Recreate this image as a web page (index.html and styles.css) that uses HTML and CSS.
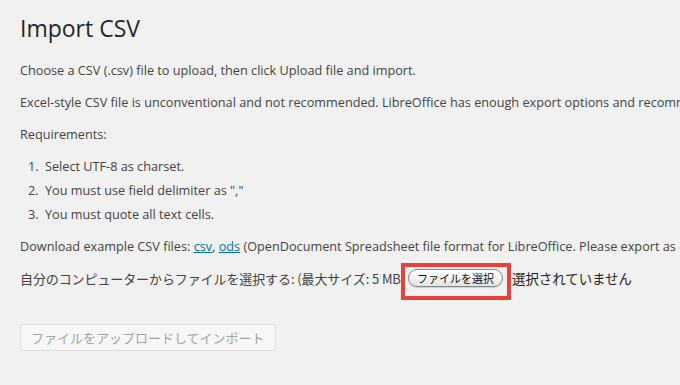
FILE: index.html
```html
<!DOCTYPE html>
<html lang="ja">
<head>
    <meta charset="UTF-8">
    <title>Import CSV</title>
    <link rel="stylesheet" href="styles.css">
</head>
<body>
    <div class="wrap">
        <h1>Import CSV</h1>

        <p>Choose a CSV (.csv) file to upload, then click Upload file and import.</p>
        <p>Excel-style CSV file is unconventional and not recommended. LibreOffice has enough export options and recommended for most users.</p>
        <p>Requirements:</p>
        <ol>
            <li>Select UTF-8 as charset.</li>
            <li>You must use field delimiter as ","</li>
            <li>You must quote all text cells.</li>
        </ol>
        <p class="examples">Download example CSV files: <a href="#">csv</a>, <a href="#">ods</a> (OpenDocument Spreadsheet file format for LibreOffice. Please export as csv before import)</p>

        <form class="upload-form">
            <p class="file-row">
                <label>自分のコンピューターからファイルを選択する: (最大サイズ: 5 MB)</label>
                <span class="highlight">
                    <span class="file-button">ファイルを選択</span>
                </span>
                <span class="file-status">選択されていません</span>
            </p>
            <p class="submit">
                <button type="button" class="button" disabled>ファイルをアップロードしてインポート</button>
            </p>
        </form>
    </div>
</body>
</html>
```

FILE: styles.css
```css
html, body {
    margin: 0;
    padding: 0;
    overflow: hidden;
}

body {
    background-color: #f1f1f1;
    color: #444444;
    font-family: 'Open Sans', 'Noto Sans CJK JP', sans-serif;
    font-size: 12.7px;
    line-height: 19px;
}

.wrap {
    padding: 0 20px;
    white-space: nowrap;
}

h1 {
    margin: 0;
    padding: 14px 0 5px;
    font-size: 23px;
    font-weight: 400;
    line-height: 29px;
    color: #23282d;
}

p {
    margin: 13px 0;
}

ol {
    margin: 13px 0 13px 25px;
    padding: 0;
}

ol li {
    margin-bottom: 5px;
}

ol li::marker {
    content: counter(list-item) ".\2002";
}

a {
    color: #0073aa;
}

.examples {
    margin-bottom: 7px;
}

.file-row {
    display: flex;
    align-items: center;
    margin-top: 0;
}

.file-row label {
    padding-bottom: 7px;
    font-family: 'Noto Sans CJK JP', sans-serif;
    font-size: 13px;
    letter-spacing: -0.1px;
}

.highlight {
    display: inline-flex;
    align-items: center;
    margin-left: -4px;
    padding: 2px 4px 9px 3px;
    border: 4px solid #e8413a;
}

.file-button {
    display: inline-block;
    height: 16px;
    padding: 0 8px;
    border: 1px solid #8a8a8a;
    border-radius: 9px;
    background: linear-gradient(#ffffff, #f4f4f4 50%, #e2e2e2);
    box-shadow: 0 1px 1px rgba(0, 0, 0, 0.15);
    font-family: 'Noto Sans CJK JP', sans-serif;
    font-size: 11px;
    line-height: 16px;
    color: #111111;
}

.file-status {
    margin-left: 1px;
    padding-bottom: 7px;
    font-family: 'Noto Sans CJK JP', sans-serif;
    font-size: 13.4px;
    color: #222222;
}

.submit {
    margin-top: 24px;
}

.button {
    height: 27px;
    padding: 0 10px;
    border: 1px solid #dddddd;
    border-radius: 3px;
    background: #f7f7f7;
    color: #a0a5aa;
    font-family: 'Noto Sans CJK JP', sans-serif;
    font-size: 13px;
    line-height: 25px;
}
```
